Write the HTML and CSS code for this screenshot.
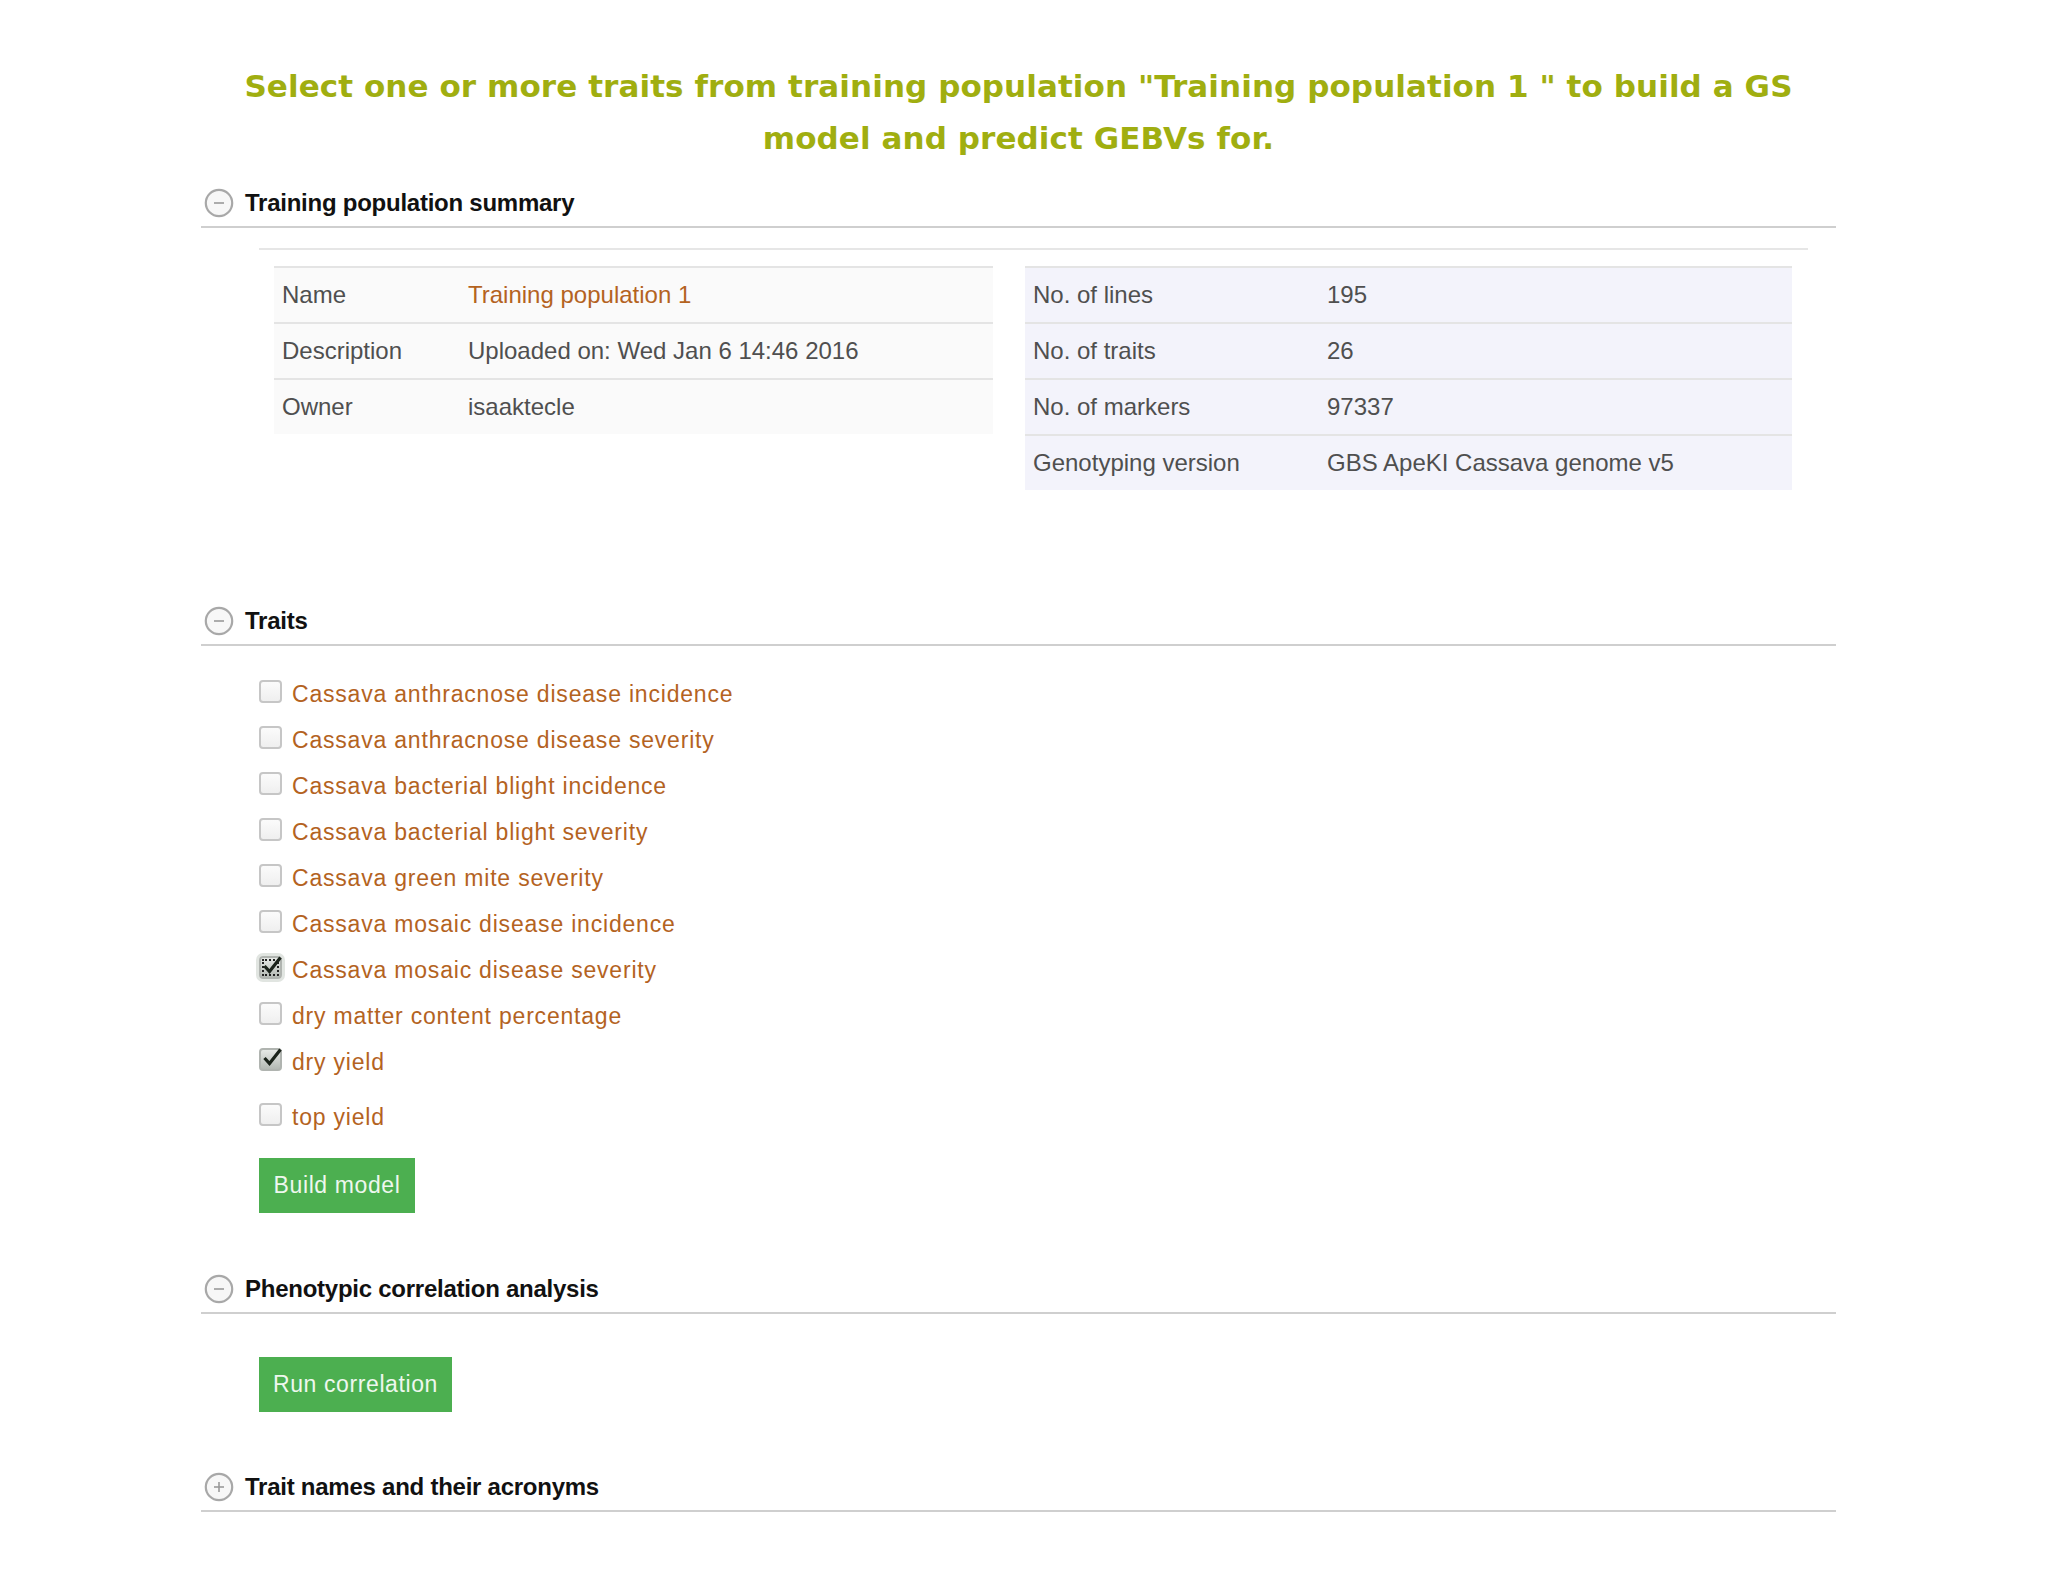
FILE: index.html
```html
<!DOCTYPE html>
<html>
<head>
<meta charset="utf-8">
<link rel="stylesheet" href="styles.css">
</head>
<body>
<div class="page">
  <h1 class="title">Select one or more traits from training population "Training population 1 " to build a GS model and predict GEBVs for.</h1>

  <section class="sec sec-summary">
    <div class="sec-head">
      <span class="toggle"><svg viewBox="0 0 30 30" width="30" height="30"><circle cx="15" cy="15" r="13.2" fill="#f7f7f7" stroke="#a8a8a8" stroke-width="2.2"/><line x1="10" y1="15" x2="20" y2="15" stroke="#999" stroke-width="1.6"/></svg></span>
      <span class="sec-title">Training population summary</span>
    </div>
    <div class="summary">
      <table class="info info-left">
        <tr><td class="lbl">Name</td><td class="val link">Training population 1</td></tr>
        <tr><td class="lbl">Description</td><td class="val">Uploaded on: Wed Jan 6 14:46 2016</td></tr>
        <tr><td class="lbl">Owner</td><td class="val">isaaktecle</td></tr>
      </table>
      <table class="info info-right">
        <tr><td class="lbl">No. of lines</td><td class="val">195</td></tr>
        <tr><td class="lbl">No. of traits</td><td class="val">26</td></tr>
        <tr><td class="lbl">No. of markers</td><td class="val">97337</td></tr>
        <tr><td class="lbl">Genotyping version</td><td class="val">GBS ApeKI Cassava genome v5</td></tr>
      </table>
    </div>
  </section>

  <section class="sec sec-traits">
    <div class="sec-head">
      <span class="toggle"><svg viewBox="0 0 30 30" width="30" height="30"><circle cx="15" cy="15" r="13.2" fill="#f7f7f7" stroke="#a8a8a8" stroke-width="2.2"/><line x1="10" y1="15" x2="20" y2="15" stroke="#999" stroke-width="1.6"/></svg></span>
      <span class="sec-title">Traits</span>
    </div>
    <ul class="traits">
      <li><span class="cb"></span><span class="trait">Cassava anthracnose disease incidence</span></li>
      <li><span class="cb"></span><span class="trait">Cassava anthracnose disease severity</span></li>
      <li><span class="cb"></span><span class="trait">Cassava bacterial blight incidence</span></li>
      <li><span class="cb"></span><span class="trait">Cassava bacterial blight severity</span></li>
      <li><span class="cb"></span><span class="trait">Cassava green mite severity</span></li>
      <li><span class="cb"></span><span class="trait">Cassava mosaic disease incidence</span></li>
      <li><span class="cb cb-checked cb-focus"><svg class="tick" viewBox="0 0 24 24" width="24" height="24"><path d="M4.5 12 L9.5 17.5 L20.5 3.5" fill="none" stroke="#1b231b" stroke-width="3.2" stroke-linejoin="miter"/></svg></span><span class="trait">Cassava mosaic disease severity</span></li>
      <li><span class="cb"></span><span class="trait">dry matter content percentage</span></li>
      <li><span class="cb cb-checked"><svg class="tick" viewBox="0 0 24 24" width="24" height="24"><path d="M4.5 12 L9.5 17.5 L20.5 3.5" fill="none" stroke="#1b231b" stroke-width="3.2" stroke-linejoin="miter"/></svg></span><span class="trait">dry yield</span></li>
      <li class="last"><span class="cb"></span><span class="trait">top yield</span></li>
    </ul>
    <button class="btn btn-build">Build model</button>
  </section>

  <section class="sec sec-corr">
    <div class="sec-head">
      <span class="toggle"><svg viewBox="0 0 30 30" width="30" height="30"><circle cx="15" cy="15" r="13.2" fill="#f7f7f7" stroke="#a8a8a8" stroke-width="2.2"/><line x1="10" y1="15" x2="20" y2="15" stroke="#999" stroke-width="1.6"/></svg></span>
      <span class="sec-title">Phenotypic correlation analysis</span>
    </div>
    <button class="btn btn-corr">Run correlation</button>
  </section>

  <section class="sec sec-acr">
    <div class="sec-head">
      <span class="toggle"><svg viewBox="0 0 30 30" width="30" height="30"><circle cx="15" cy="15" r="13.2" fill="#f7f7f7" stroke="#a8a8a8" stroke-width="2.2"/><line x1="10" y1="15" x2="20" y2="15" stroke="#999" stroke-width="1.6"/><line x1="15" y1="10" x2="15" y2="20" stroke="#999" stroke-width="1.6"/></svg></span>
      <span class="sec-title">Trait names and their acronyms</span>
    </div>
  </section>
</div>
</body>
</html>
```
FILE: styles.css
```css
html, body {
  margin: 0;
  padding: 0;
  background: #ffffff;
}
body {
  font-family: "Liberation Sans", Arial, sans-serif;
  color: #444;
}
.page {
  width: 1635px;
  margin-left: 201px;
  padding-top: 60px;
  padding-bottom: 40px;
}
.title {
  margin: 0;
  font-family: "DejaVu Sans", Verdana, sans-serif;
  font-weight: bold;
  font-size: 31px;
  letter-spacing: 0.08px;
  line-height: 52px;
  color: #a0ae10;
  text-align: center;
  padding: 0 30px;
}
.sec {
  margin-top: 15px;
}
.sec-summary { margin-top: 16px; }
.sec-head {
  display: flex;
  align-items: center;
  height: 46px;
  border-bottom: 2px solid #cfcfcf;
  padding-left: 3px;
}
.toggle {
  display: flex;
  width: 30px;
  height: 30px;
  margin-right: 11px;
}
.sec-title {
  font-weight: bold;
  font-size: 24px;
  letter-spacing: -0.25px;
  color: #111;
}
.summary {
  margin: 20px 28px 0 58px;
  border-top: 2px solid #e6e6e6;
  padding: 16px 16px 0 15px;
  display: flex;
  align-items: flex-start;
  gap: 32px;
}
.info {
  border-collapse: collapse;
  font-size: 24px;
  color: #4f4f4f;
}
.info td {
  height: 54px;
  padding: 0 8px;
  border-top: 2px solid #e4e4e4;
  vertical-align: middle;
}
.info-left {
  width: 719px;
  background: #fafafa;
}
.info-left .lbl { width: 170px; }
.info-right {
  width: 767px;
  background: #f3f3fb;
}
.info-right .lbl { width: 278px; }
.link { color: #b4631f; }

.sec-traits { margin-top: 108px; }
.traits {
  list-style: none;
  margin: 25px 0 0 58px;
  padding: 0;
}
.traits li {
  display: flex;
  align-items: center;
  height: 46px;
}
.traits li.last { margin-top: 9px; }
.cb {
  position: relative;
  box-sizing: border-box;
  width: 23px;
  height: 23px;
  border: 2px solid #c6c6c6;
  border-radius: 4px;
  background: linear-gradient(#fbfbfb, #efefef);
  margin-right: 10px;
  margin-top: -6px;
  flex: none;
}
.cb-checked {
  background: linear-gradient(#e6e9e6, #b4b9b4);
  border-color: #b0b4b0;
}
.tick {
  position: absolute;
  left: -1px;
  top: -4px;
  overflow: visible;
}
.cb-focus {
  outline: 2px dotted #222;
  outline-offset: -5px;
  box-shadow: 0 0 0 3px #e1e5e1;
}
.trait {
  font-size: 23px;
  letter-spacing: 0.8px;
  color: #b4631f;
}
.btn {
  display: block;
  border: none;
  background: #4caf50;
  color: #eef7ee;
  font-family: "Liberation Sans", Arial, sans-serif;
  font-size: 23px;
  letter-spacing: 0.6px;
  height: 55px;
  padding: 0 8px;
  margin-left: 58px;
}
.btn-build { margin-top: 18px; width: 156px; }
.sec-corr { margin-top: 53px; }
.btn-corr { margin-top: 43px; width: 193px; }
.sec-acr { margin-top: 52px; }
```
